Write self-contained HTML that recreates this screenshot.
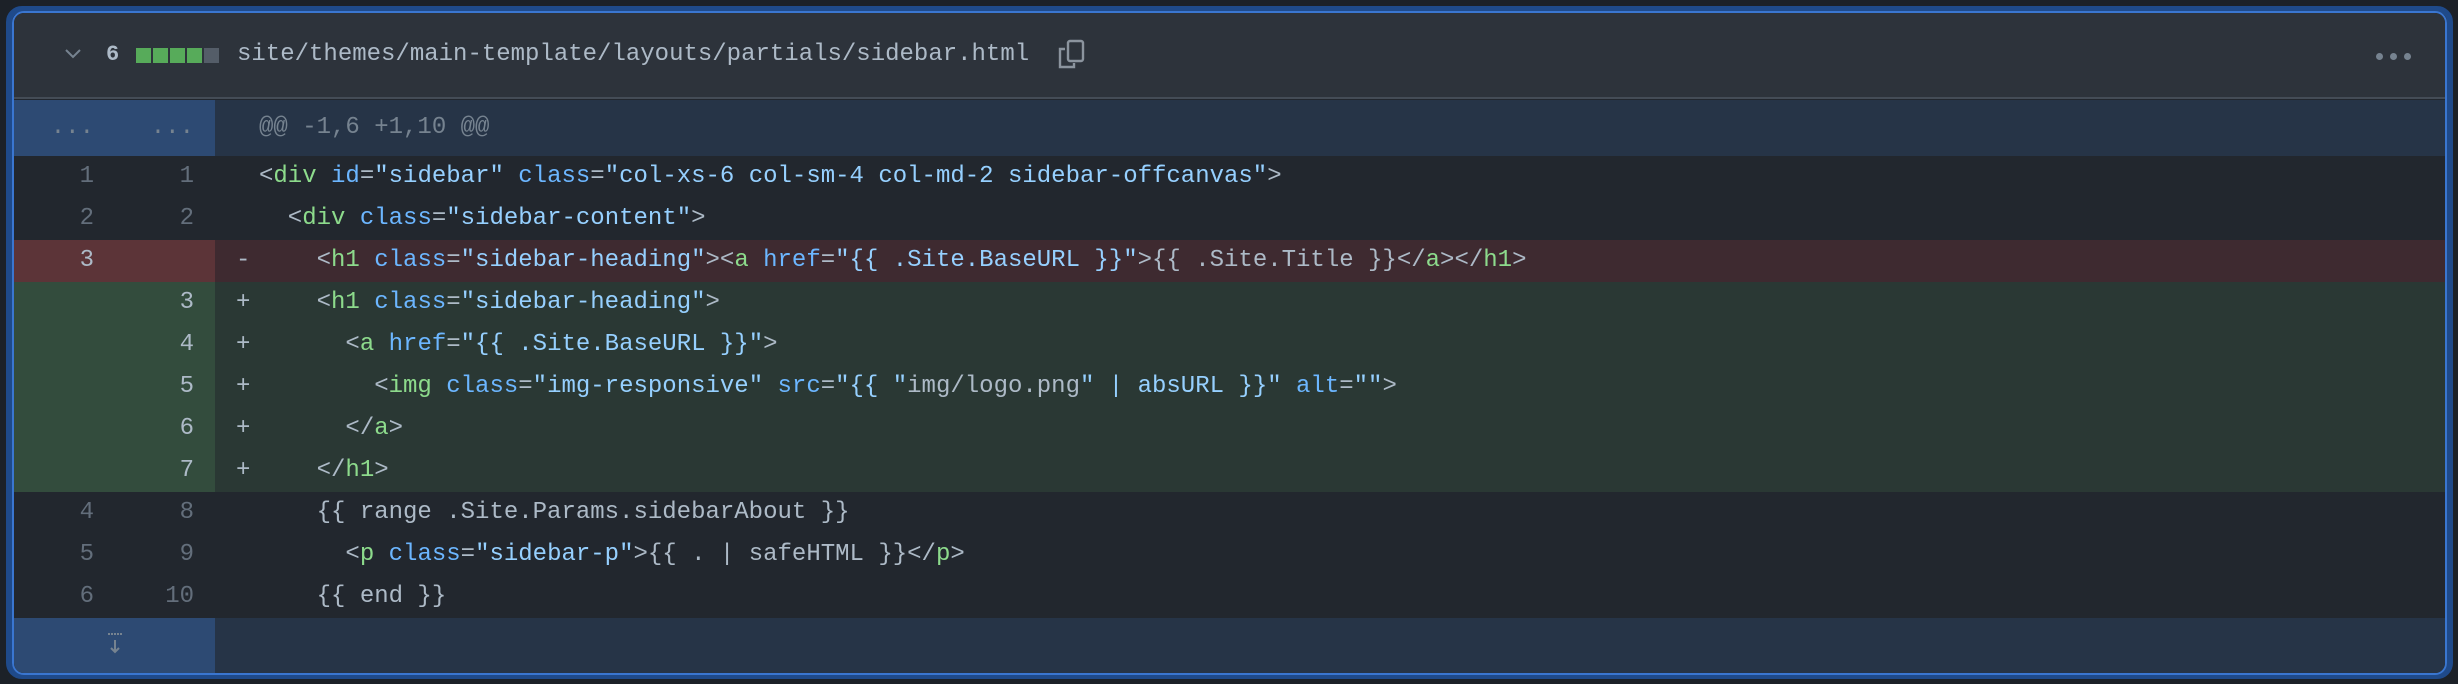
<!DOCTYPE html>
<html><head><meta charset="utf-8"><style>
*{margin:0;padding:0;box-sizing:border-box}
body{width:2458px;height:684px;background:#1c2128;overflow:hidden;font-family:"Liberation Mono",monospace;font-size:24px;color:#adbac7}
.ring{position:absolute;left:6px;top:6px;width:2447px;height:673px;border:6px solid #1f4a8a;border-radius:16px}
.box{position:absolute;left:12px;top:11px;width:2435px;height:664px;border:2px solid #3a76d0;border-radius:12px;overflow:hidden;background:#22272e}
.hdr{position:absolute;left:0;top:0;width:100%;height:86px;background:#2d333b;border-bottom:2px solid #444c56}
.rows{position:absolute;left:0;top:87px;width:100%}
.r{height:42px;line-height:42px;position:relative;white-space:pre}
.g1,.g2{position:absolute;top:0;height:100%;text-align:right;color:#636e7b}
.g1{left:0;width:80px}
.g2{left:80px;width:100px}
.gut{position:absolute;left:0;top:0;width:201px;height:100%}
.c{position:absolute;left:245px;top:0}
.s{position:absolute;left:222px;top:0}
.hunk{height:56px;line-height:56px;background:#263447}
.hunk .gut{background:#2d4a73}
.del{background:#3e2a30}.del .gut{background:#5c3438}
.add{background:#2a3834}.add .gut{background:#334c3d}
.del .g1,.add .g2{color:#adbac7}
.t{color:#8ddb8c}.a{color:#6cb6ff}.q{color:#96d0ff}
.exp{height:56px;background:#263447}.exp .gut{background:#2d4a73}
</style></head><body>
<div class="ring"></div>
<div class="box">
<div class="hdr">
<svg style="position:absolute;left:50px;top:35px" width="18" height="12" viewBox="0 0 18 12"><path d="M2 2l7 7 7-7" stroke="#768390" stroke-width="2" fill="none"/></svg>
<span style="position:absolute;left:92px;top:27px;line-height:30px;color:#adbac7;font-weight:bold;font-size:22px">6</span>
<div style="position:absolute;left:122px;top:35px;display:flex;gap:2px">
<i style="width:15px;height:15px;background:#57ab5a"></i><i style="width:15px;height:15px;background:#57ab5a"></i><i style="width:15px;height:15px;background:#57ab5a"></i><i style="width:15px;height:15px;background:#57ab5a"></i><i style="width:15px;height:15px;background:#545d68"></i></div>
<span style="position:absolute;left:223px;top:27px;line-height:30px;color:#adbac7">site/themes/main-template/layouts/partials/sidebar.html</span>
<svg style="position:absolute;left:1042px;top:25px" width="32" height="34" viewBox="0 0 32 34" fill="none" stroke="#8b949e" stroke-width="2.4"><path d="M9 11H4v18h14v-4"/><rect x="12" y="3" width="15" height="20" rx="2"/></svg>
<div style="position:absolute;left:2362px;top:40px;display:flex;gap:7px"><i style="width:7px;height:7px;border-radius:50%;background:#768390"></i><i style="width:7px;height:7px;border-radius:50%;background:#768390"></i><i style="width:7px;height:7px;border-radius:50%;background:#768390"></i></div>
</div>
<div class="rows">
<div class="r hunk"><div class="gut"></div><span class="g1" style="color:#768390">...</span><span class="g2" style="color:#768390">...</span><span class="c" style="color:#768390">@@ -1,6 +1,10 @@</span></div>
<div class="r"><div class="gut"></div><span class="g1">1</span><span class="g2">1</span><span class="c">&lt;<span class="t">div</span> <span class="a">id</span>=<span class="q">"sidebar"</span> <span class="a">class</span>=<span class="q">"col-xs-6 col-sm-4 col-md-2 sidebar-offcanvas"</span>&gt;</span></div>
<div class="r"><div class="gut"></div><span class="g1">2</span><span class="g2">2</span><span class="c">  &lt;<span class="t">div</span> <span class="a">class</span>=<span class="q">"sidebar-content"</span>&gt;</span></div>
<div class="r del"><div class="gut"></div><span class="g1">3</span><span class="g2"></span><span class="s">-</span><span class="c">    &lt;<span class="t">h1</span> <span class="a">class</span>=<span class="q">"sidebar-heading"</span>&gt;&lt;<span class="t">a</span> <span class="a">href</span>=<span class="q">"{{ .Site.BaseURL }}"</span>&gt;{{ .Site.Title }}&lt;/<span class="t">a</span>&gt;&lt;/<span class="t">h1</span>&gt;</span></div>
<div class="r add"><div class="gut"></div><span class="g2">3</span><span class="s">+</span><span class="c">    &lt;<span class="t">h1</span> <span class="a">class</span>=<span class="q">"sidebar-heading"</span>&gt;</span></div>
<div class="r add"><div class="gut"></div><span class="g2">4</span><span class="s">+</span><span class="c">      &lt;<span class="t">a</span> <span class="a">href</span>=<span class="q">"{{ .Site.BaseURL }}"</span>&gt;</span></div>
<div class="r add"><div class="gut"></div><span class="g2">5</span><span class="s">+</span><span class="c">        &lt;<span class="t">img</span> <span class="a">class</span>=<span class="q">"img-responsive"</span> <span class="a">src</span>=<span class="q">"{{ "</span>img/logo.png<span class="q">" | absURL }}"</span> <span class="a">alt</span>=<span class="q">""</span>&gt;</span></div>
<div class="r add"><div class="gut"></div><span class="g2">6</span><span class="s">+</span><span class="c">      &lt;/<span class="t">a</span>&gt;</span></div>
<div class="r add"><div class="gut"></div><span class="g2">7</span><span class="s">+</span><span class="c">    &lt;/<span class="t">h1</span>&gt;</span></div>
<div class="r"><div class="gut"></div><span class="g1">4</span><span class="g2">8</span><span class="c">    {{ range .Site.Params.sidebarAbout }}</span></div>
<div class="r"><div class="gut"></div><span class="g1">5</span><span class="g2">9</span><span class="c">      &lt;<span class="t">p</span> <span class="a">class</span>=<span class="q">"sidebar-p"</span>&gt;{{ . | safeHTML }}&lt;/<span class="t">p</span>&gt;</span></div>
<div class="r"><div class="gut"></div><span class="g1">6</span><span class="g2">10</span><span class="c">    {{ end }}</span></div>
<div class="r exp"><div class="gut"></div>
<svg style="position:absolute;left:93px;top:14px" width="16" height="24" viewBox="0 0 16 24" fill="none" stroke="#768390" stroke-width="2"><path d="M1 2h14" stroke-dasharray="2 1"/><path d="M8 8v12M4 16l4 4 4-4"/></svg></div>
</div>
</div>
</body></html>
